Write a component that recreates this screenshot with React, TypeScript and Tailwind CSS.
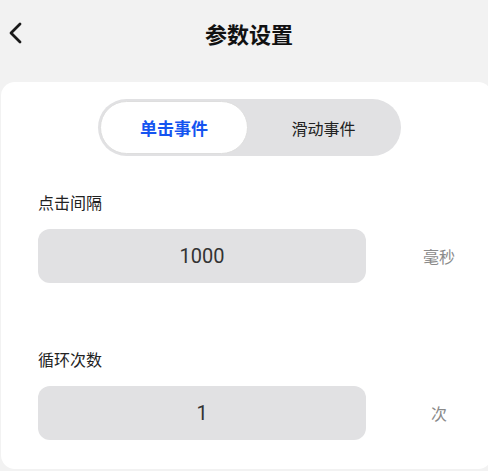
import React from 'react'

const font = { fontFamily: '"Noto Sans CJK SC", "Noto Sans", sans-serif' }

function Field({ label, value, unit, unitPad }: { label: string; value: string; unit: string; unitPad: string }) {
    return (
        <div className="flex flex-col">
            <div className="text-[16px] leading-[20px] text-[#222] pl-[37px]">{label}</div>
            <div className="flex items-center mt-[17px]">
                <div
                    className="ml-[37px] w-[328px] h-[54px] rounded-[12px] bg-[#e1e1e3] flex items-center justify-center text-[20px] text-[#333]"
                    style={{ fontFamily: 'Roboto, "Noto Sans", sans-serif' }}
                >
                    {value}
                </div>
                <div className={`text-[16px] text-[#8a8a8a] ${unitPad}`}>{unit}</div>
            </div>
        </div>
    )
}

export default function App() {
    return (
        <div className="w-[488px] h-[471px] bg-[#f2f2f2] overflow-hidden relative" style={font}>
            {/* header */}
            <div className="h-[68px] flex items-center relative">
                <svg className="absolute left-[6px] top-[21px]" width="18" height="24" viewBox="0 0 18 24">
                    <path d="M14 3 L5 12 L14 21" fill="none" stroke="#1a1a1a" strokeWidth="2.8" strokeLinecap="round" strokeLinejoin="round" />
                </svg>
                <div className="w-full text-center text-[22px] font-bold text-[#111] mt-[-2px] pl-[10px]">参数设置</div>
            </div>

            {/* card */}
            <div className="mt-[14px] ml-[1px] w-[491px] h-[387px] bg-white rounded-[14px] pt-[17px]">
                <div className="ml-[97px] w-[303px] h-[57px] rounded-full bg-[#e1e1e3] flex items-center p-[2px]">
                    <div className="w-[148px] h-full rounded-full bg-white border border-[#dedede] flex items-center justify-center text-[17px] font-bold text-[#1554f0]">
                        单击事件
                    </div>
                    <div className="flex-1 flex items-center justify-center text-[16px] text-[#222]">滑动事件</div>
                </div>

                <div className="mt-[36px]">
                    <Field label="点击间隔" value="1000" unit="毫秒" unitPad="ml-[57px]" />
                </div>
                <div className="mt-[66px]">
                    <Field label="循环次数" value="1" unit="次" unitPad="ml-[65px]" />
                </div>
            </div>
        </div>
    )
}
